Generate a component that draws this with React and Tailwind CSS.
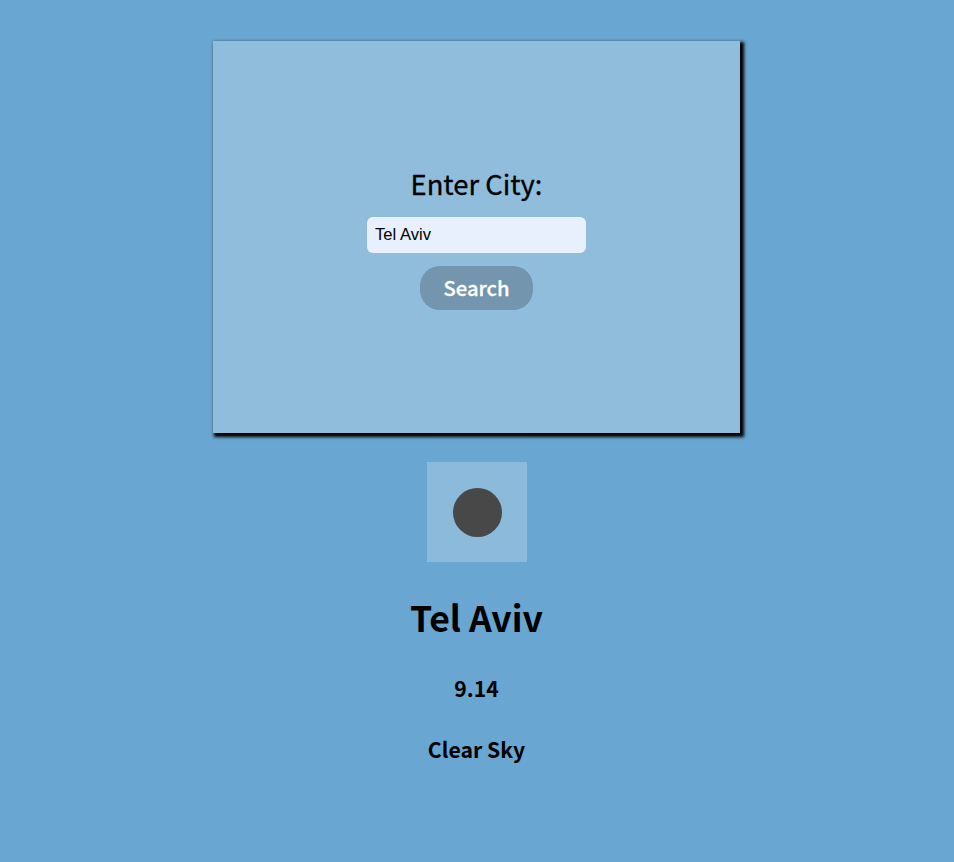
export default function App() {
  return (
    <main className="flex min-h-screen flex-col items-center bg-[#69a6d1] pt-[41px] font-['Noto_Sans_CJK_JP','Noto_Sans_CJK_SC',sans-serif] text-black">
      <form className="mr-px flex h-[392px] w-[527px] flex-col items-center bg-[#91bddd] pt-[120px] shadow-[2.5px_2.5px_3px_1.5px_#000]">
        <label className="h-14 text-[27.4px] leading-[44px] whitespace-nowrap [-webkit-text-stroke:0.3px_black]">Enter City:</label>
        <input
          defaultValue="Tel Aviv"
          className="h-9 w-[219px] rounded-[6px] bg-[#e8f0fe] px-2 font-['Liberation_Sans',sans-serif] text-[16.6px] text-black outline-none"
        />
        <button type="button" className="mt-[13px] h-11 w-[113px] rounded-[20px] bg-[#7395ae] pb-px text-[20.2px] leading-[43px] font-medium text-white [-webkit-text-stroke:0.3px_white]">
          Search
        </button>
      </form>
      <div className="mt-[29px] flex size-[100px] items-center justify-center bg-[#8bbada]">
        <div className="mt-px ml-px size-[49px] rounded-full bg-[#484848]" />
      </div>
      <h1 className="mt-[27px] mr-px text-[35.5px] leading-[56px] font-bold">Tel Aviv</h1>
      <h2 className="mt-[26px] mr-px text-[21.2px] leading-[34px] font-bold">9.14</h2>
      <h2 className="mt-[27px] mr-px text-[21.2px] leading-[34px] font-bold">Clear Sky</h2>
    </main>
  );
}
